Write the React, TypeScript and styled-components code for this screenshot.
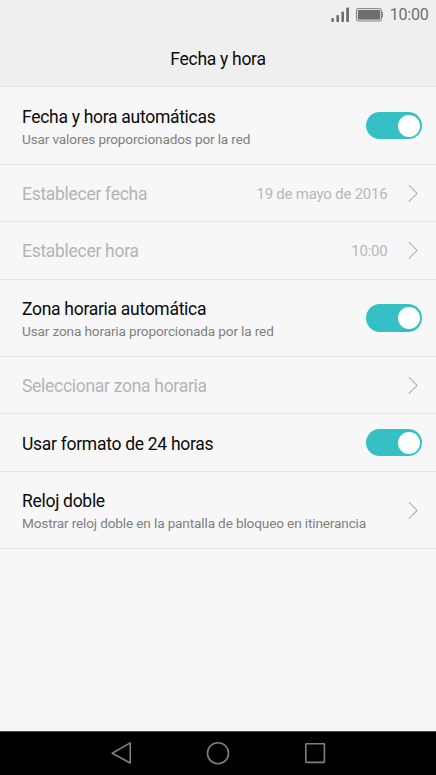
import React, { FunctionComponent, useState } from "react";
import styled, { createGlobalStyle } from "styled-components";

type SettingType = {
  id: number;
  title: string;
  summary?: string;
  value?: string;
  disabled?: boolean;
  checked?: boolean;
  height: number;
};

const initialSettings: SettingType[] = [
  {
    id: 1,
    title: "Fecha y hora automáticas",
    summary: "Usar valores proporcionados por la red",
    checked: true,
    height: 78,
  },
  {
    id: 2,
    title: "Establecer fecha",
    value: "19 de mayo de 2016",
    disabled: true,
    height: 57,
  },
  {
    id: 3,
    title: "Establecer hora",
    value: "10:00",
    disabled: true,
    height: 58,
  },
  {
    id: 4,
    title: "Zona horaria automática",
    summary: "Usar zona horaria proporcionada por la red",
    checked: true,
    height: 77,
  },
  {
    id: 5,
    title: "Seleccionar zona horaria",
    disabled: true,
    height: 57.25,
  },
  {
    id: 6,
    title: "Usar formato de 24 horas",
    checked: true,
    height: 57.75,
  },
  {
    id: 7,
    title: "Reloj doble",
    summary: "Mostrar reloj doble en la pantalla de bloqueo en itinerancia",
    height: 77,
  },
];

const StatusIcons: FunctionComponent = () => (
  <svg width="52" height="16" viewBox="0 0 52 16">
    <g fill="#6e6e6e">
      <rect x="0.3" y="11" width="2.6" height="4" rx="0.8" />
      <rect x="5.4" y="8" width="2.6" height="7" rx="0.8" />
      <rect x="10.4" y="4.6" width="2.6" height="10.4" rx="0.8" />
      <rect x="15.2" y="0.4" width="2.8" height="14.6" rx="0.8" />
      <rect x="26.8" y="3" width="22.4" height="9.6" />
      <path d="M50.3 4.8h.6a.9.9 0 0 1 .9.9v4a.9.9 0 0 1-.9.9h-.6z" />
    </g>
    <rect
      x="25.4"
      y="1.6"
      width="25"
      height="12.4"
      rx="1.6"
      fill="none"
      stroke="#808080"
      strokeWidth="1"
    />
  </svg>
);

const Chevron: FunctionComponent = () => (
  <svg width="11" height="19" viewBox="0 0 11 19">
    <path
      d="M1.8 1.2L10.1 9.4L1.8 17.6"
      fill="none"
      stroke="#b2b2b2"
      strokeWidth="1.1"
    />
  </svg>
);

export const Setting: FunctionComponent<SettingType> = (props) => {
  const { title, summary, value, disabled, checked, height } = props;
  const [isOn, setIsOn] = useState<boolean>(!!checked);

  return (
    <SettingContainer $height={height}>
      <SettingText>
        <SettingTitle $disabled={disabled}>{title}</SettingTitle>
        {summary && <SettingSummary>{summary}</SettingSummary>}
      </SettingText>
      {value && <SettingValue>{value}</SettingValue>}
      {checked !== undefined ? (
        <Switch
          type="button"
          role="switch"
          aria-checked={isOn}
          aria-label={title}
          $on={isOn}
          onClick={() => setIsOn(!isOn)}
        >
          <SwitchKnob />
        </Switch>
      ) : (
        <ChevronBox>
          <Chevron />
        </ChevronBox>
      )}
    </SettingContainer>
  );
};

const App: FunctionComponent = () => (
  <>
    <GlobalStyle />
    <Screen>
      <Header>
        <StatusBar>
          <StatusIcons />
          <Clock>10:00</Clock>
        </StatusBar>
        <HeaderTitle>Fecha y hora</HeaderTitle>
      </Header>
      <SettingList>
        {initialSettings.map((setting) => (
          <Setting key={setting.id} {...setting} />
        ))}
      </SettingList>
      <NavigationBar>
        <NavButton type="button" aria-label="Atrás">
          <svg width="24" height="24" viewBox="0 0 24 24">
            <path d="M21.2 1.9V22L3.2 12.2Z" />
          </svg>
        </NavButton>
        <NavButton type="button" aria-label="Inicio">
          <svg width="24" height="24" viewBox="0 0 24 24">
            <circle cx="12" cy="12.2" r="10.5" />
          </svg>
        </NavButton>
        <NavButton type="button" aria-label="Recientes">
          <svg width="24" height="24" viewBox="0 0 24 24">
            <rect x="2.8" y="2.8" width="18.6" height="18.6" rx="0.6" />
          </svg>
        </NavButton>
      </NavigationBar>
    </Screen>
  </>
);

export default App;

const GlobalStyle = createGlobalStyle`
  * {
    box-sizing: border-box;
  }
  body {
    margin: 0;
    background: #f7f7f7;
    font-family: Roboto, sans-serif;
  }
`;

const Screen = styled("div")`
  display: flex;
  flex-direction: column;
  width: 436px;
  height: 775px;
  overflow: hidden;
  background: #f7f7f7;
`;

const Header = styled("header")`
  height: 87px;
  background: #efefef;
  border-bottom: 1px solid #e3e3e3;
`;

const StatusBar = styled("div")`
  display: flex;
  align-items: center;
  justify-content: flex-end;
  height: 30px;
  padding-right: 7.5px;
`;

const Clock = styled("span")`
  margin-left: 6.5px;
  font-size: 16px;
  line-height: 20px;
  letter-spacing: -0.2px;
  color: #707070;
`;

const HeaderTitle = styled("h1")`
  margin: 18px 0 0;
  font-size: 17.5px;
  font-weight: 400;
  line-height: 22px;
  letter-spacing: -0.29px;
  text-align: center;
  color: #0c0c0c;
`;

const SettingList = styled("ul")`
  flex: 1;
  margin: 0;
  padding: 0;
  list-style: none;
`;

const SettingContainer = styled("li")<{ $height: number }>`
  display: flex;
  align-items: center;
  height: ${(props) => props.$height}px;
  padding: 0 14px 0 22px;
  border-bottom: 1px solid #e4e4e4;
`;

const SettingText = styled("div")`
  flex: 1;
  white-space: nowrap;
`;

const SettingTitle = styled("div")<{ $disabled?: boolean }>`
  padding: 2px 0 0.2px;
  font-size: 17.5px;
  line-height: 22px;
  letter-spacing: -0.29px;
  color: ${(props) => (props.$disabled ? "#b4b4b4" : "#0a0a0a")};
`;

const SettingSummary = styled("div")`
  padding-top: 1.8px;
  margin-bottom: -0.1px;
  font-size: 13.6px;
  line-height: 18px;
  letter-spacing: -0.14px;
  color: #808080;
`;

const SettingValue = styled("span")`
  padding: 2px 0 0.2px;
  margin-right: 19.5px;
  font-size: 15px;
  line-height: 20px;
  letter-spacing: -0.22px;
  color: #b8b8b8;
`;

const ChevronBox = styled("span")`
  display: flex;
  margin-right: 4px;
`;

const Switch = styled("button")<{ $on: boolean }>`
  display: flex;
  align-items: center;
  justify-content: ${(props) => (props.$on ? "flex-end" : "flex-start")};
  width: 56px;
  height: 27.5px;
  padding: 0 2.5px;
  border: none;
  border-radius: 14px;
  background: ${(props) => (props.$on ? "#35c0c5" : "#c4c4c4")};
`;

const SwitchKnob = styled("span")`
  width: 22px;
  height: 22px;
  border-radius: 50%;
  background: #fff;
`;

const NavigationBar = styled("nav")`
  display: flex;
  align-items: center;
  justify-content: center;
  gap: 73px;
  height: 44px;
  padding-bottom: 1px;
  background: #000;
  border-top: 1px solid #4a4a4a;
`;

const NavButton = styled("button")`
  display: flex;
  padding: 0;
  border: none;
  background: none;

  svg {
    fill: none;
    stroke: #7f7f7f;
    stroke-width: 1.6;
    stroke-linejoin: round;
  }
`;
